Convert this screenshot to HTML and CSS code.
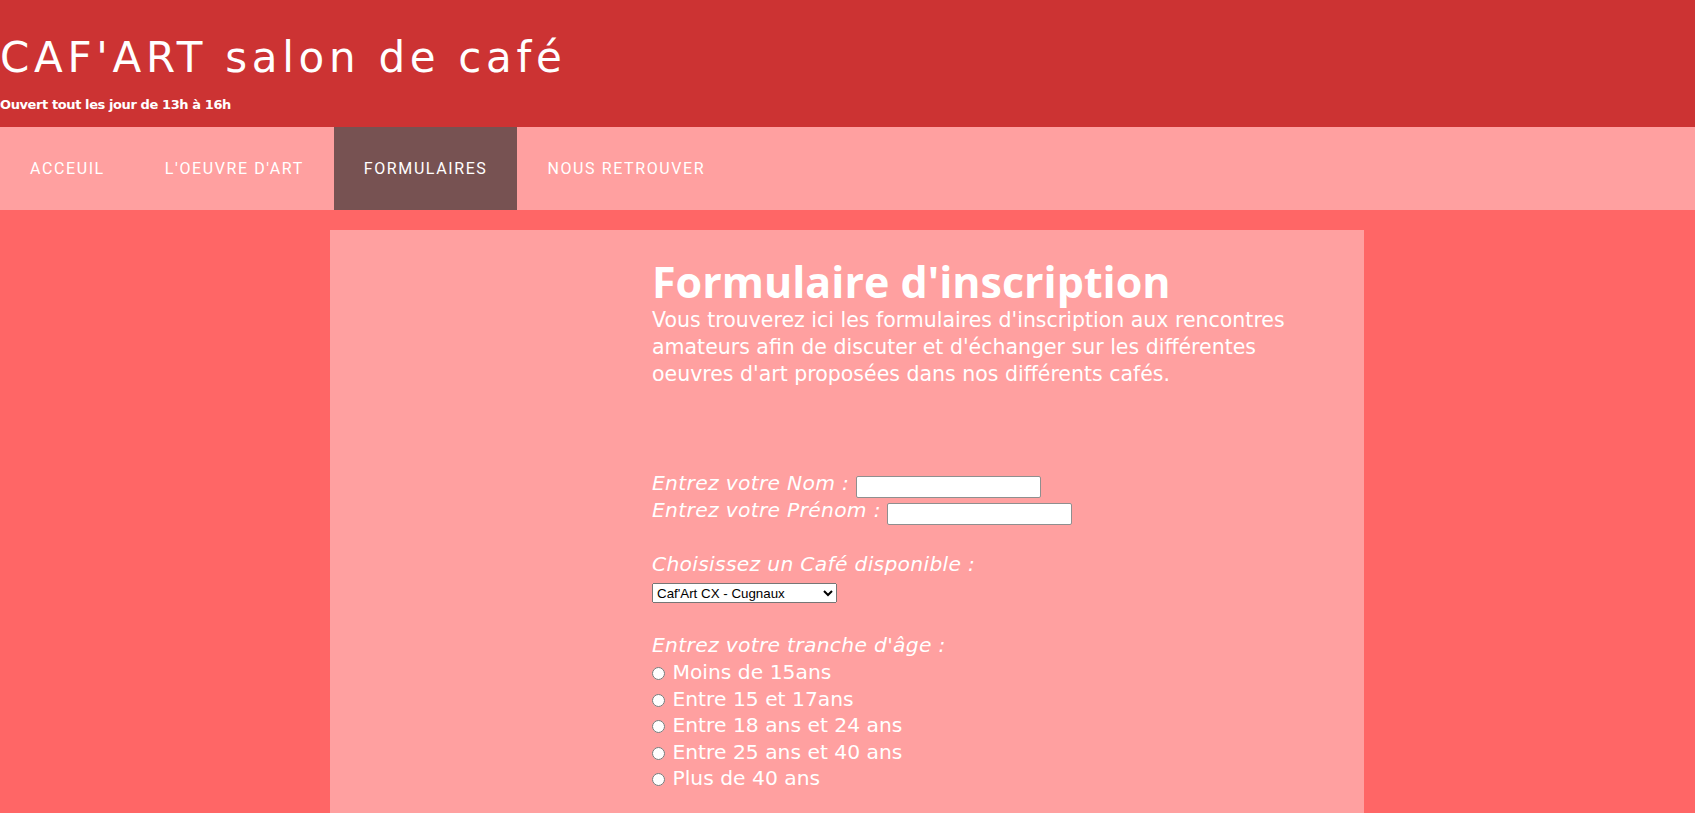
FILE: index.html
```html
<!DOCTYPE html>
<html lang="fr">
<head>
<meta charset="utf-8">
<title>CAF'ART salon de café</title>
<link rel="stylesheet" href="styles.css">
</head>
<body>
<header class="site-header">
  <h1 class="site-title">CAF'ART salon de café</h1>
  <p class="site-hours">Ouvert tout les jour de 13h à 16h</p>
</header>
<nav class="main-nav">
  <a class="nav-item" href="#">Acceuil</a>
  <a class="nav-item" href="#">L'oeuvre d'art</a>
  <a class="nav-item active" href="#">Formulaires</a>
  <a class="nav-item" href="#">Nous retrouver</a>
</nav>
<main class="content">
  <section class="form-column">
    <h2 class="form-title">Formulaire d'inscription</h2>
    <p class="intro">Vous trouverez ici les formulaires d'inscription aux rencontres amateurs afin de discuter et d'échanger sur les différentes oeuvres d'art proposées dans nos différents cafés.</p>
    <form class="signup">
      <div class="field-line"><label class="lbl" for="nom">Entrez votre Nom :</label> <input class="txt" type="text" id="nom"></div>
      <div class="field-line"><label class="lbl" for="prenom">Entrez votre Prénom :</label> <input class="txt" type="text" id="prenom"></div>
      <div class="spacer"></div>
      <div class="field-line"><label class="lbl" for="cafe">Choisissez un Café disponible :</label></div>
      <div class="select-line">
        <select class="cafe-select" id="cafe">
          <option>Caf'Art CX - Cugnaux</option>
          <option>Caf'Art TLS - Toulouse</option>
        </select>
      </div>
      <div class="field-line age-title"><span class="lbl">Entrez votre tranche d'âge :</span></div>
      <label class="radio-line"><input class="rad" type="radio" name="age"> Moins de 15ans</label>
      <label class="radio-line"><input class="rad" type="radio" name="age"> Entre 15 et 17ans</label>
      <label class="radio-line"><input class="rad" type="radio" name="age"> Entre 18 ans et 24 ans</label>
      <label class="radio-line"><input class="rad" type="radio" name="age"> Entre 25 ans et 40 ans</label>
      <label class="radio-line"><input class="rad" type="radio" name="age"> Plus de 40 ans</label>
    </form>
  </section>
</main>
</body>
</html>
```
FILE: styles.css
```css
html, body {
  margin: 0;
  padding: 0;
}
body {
  background: #ff6666;
  font-family: "DejaVu Sans", "Open Sans", sans-serif;
  color: #fff;
  height: 813px;
  overflow: hidden;
}
.site-header {
  background: #cc3333;
  height: 127px;
  box-sizing: border-box;
  padding-top: 32px;
}
.site-title {
  margin: 0;
  font-family: "DejaVu Sans", sans-serif;
  font-weight: normal;
  font-size: 42px;
  line-height: 52px;
  letter-spacing: 4.7px;
  color: #fff;
}
.site-hours {
  margin: 12px 0 0;
  font-family: "DejaVu Sans", sans-serif;
  font-size: 13px;
  font-weight: bold;
  line-height: 18px;
  letter-spacing: -0.4px;
}
.main-nav {
  display: flex;
  height: 83px;
  background: #ffa0a0;
}
.nav-item {
  display: flex;
  align-items: center;
  padding: 0 30px;
  font-family: Roboto, "Liberation Sans", sans-serif;
  font-size: 16px;
  letter-spacing: 1.6px;
  text-transform: uppercase;
  text-decoration: none;
  color: #fff;
}
.nav-item.active {
  background: #775252;
}
.content {
  margin: 20px 0 0 330px;
  width: 1034px;
  min-height: 600px;
  background: #ffa0a0;
  box-sizing: border-box;
  padding: 27px 0 0 322px;
}
.form-column {
  width: 655px;
}
.form-title {
  margin: 0;
  font-family: "Open Sans", sans-serif;
  font-size: 43px;
  font-weight: bold;
  line-height: 50px;
}
.intro {
  margin: 0;
  font-size: 20.5px;
  line-height: 27px;
}
.signup {
  margin-top: 82px;
  font-size: 20.3px;
  line-height: 27px;
}
.lbl {
  font-style: italic;
  letter-spacing: 0.3px;
}
.field-line {
  height: 27px;
}
.txt {
  width: 185px;
  height: 22px;
  box-sizing: border-box;
  border: 1px solid #8f8f8f;
  border-radius: 2px;
  vertical-align: -1px;
  margin: 0;
}
.spacer {
  height: 27px;
}
.select-line {
  height: 22px;
  padding-top: 5px;
}
.cafe-select {
  width: 185px;
  height: 20px;
  font-family: Arial, "Liberation Sans", sans-serif;
  font-size: 13.33px;
  margin: 0;
  vertical-align: top;
}
.age-title {
  margin-top: 27px;
}
.radio-line {
  display: block;
  height: 26.6px;
}
.rad {
  margin: 0 1px 0 0;
  width: 13px;
  height: 13px;
  vertical-align: -1px;
}
```
